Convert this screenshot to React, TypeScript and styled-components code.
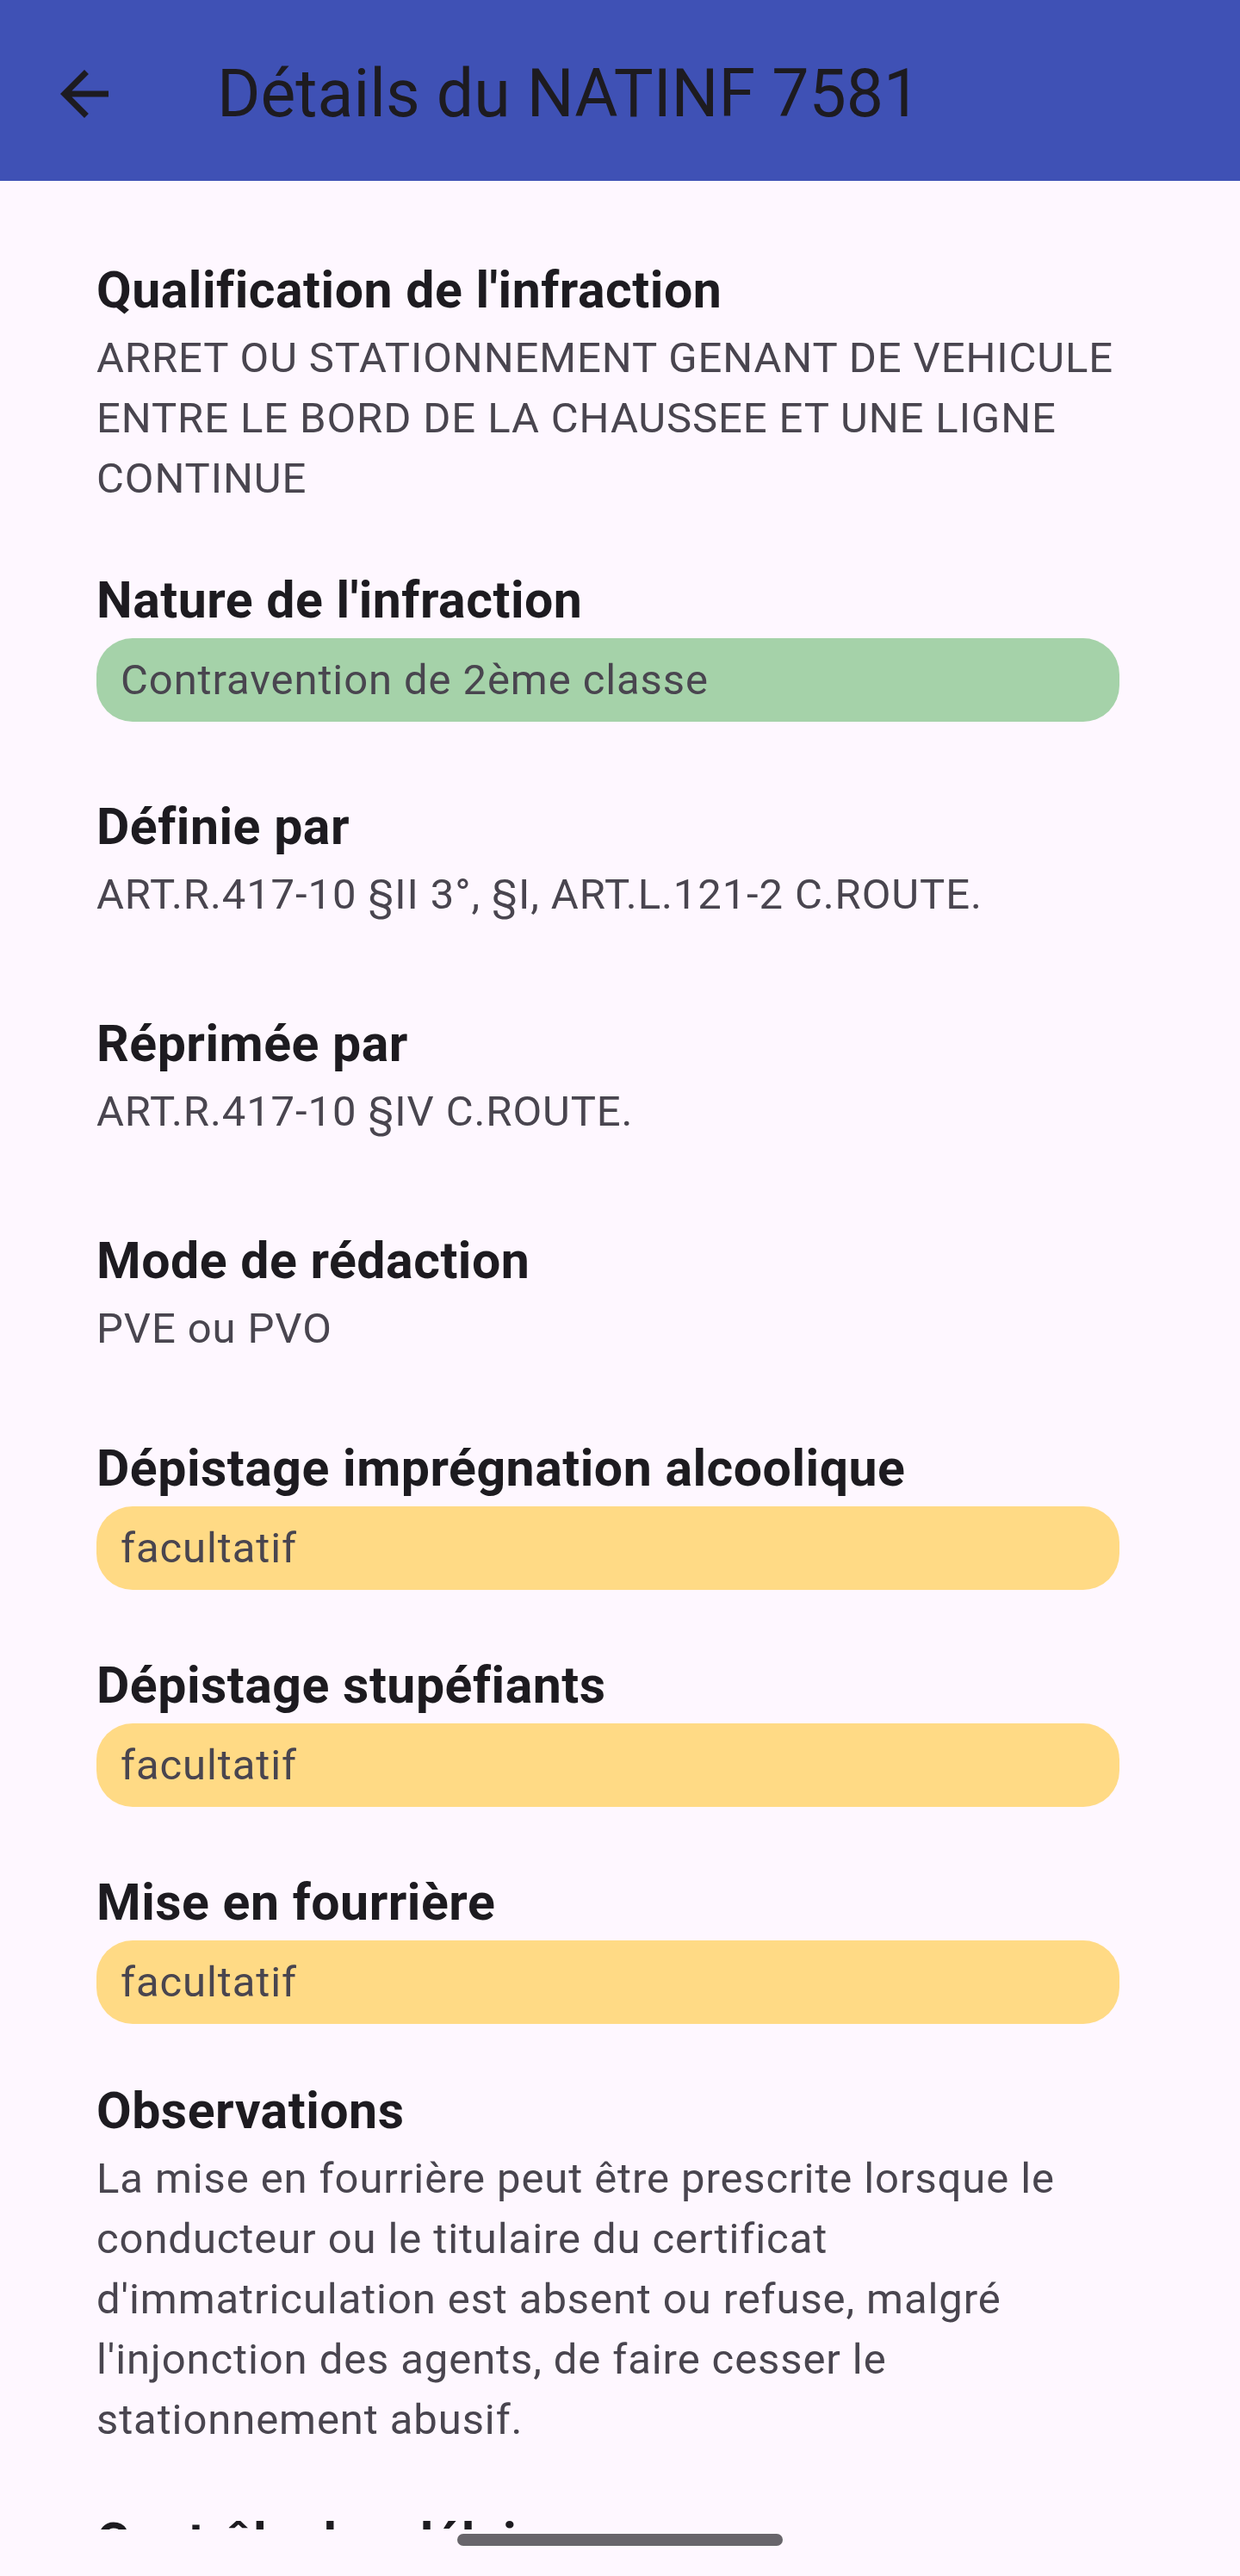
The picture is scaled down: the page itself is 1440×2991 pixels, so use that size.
import React from 'react';
import { createGlobalStyle, styled } from 'styled-components';

type TTone = 'green' | 'yellow';

type TDetail = {
  label: string;
  text: string;
  tone?: TTone;
};

const details: TDetail[] = [
  {
    label: "Qualification de l'infraction",
    text: 'ARRET OU STATIONNEMENT GENANT DE VEHICULE ENTRE LE BORD DE LA CHAUSSEE ET UNE LIGNE CONTINUE',
  },
  { label: "Nature de l'infraction", text: 'Contravention de 2ème classe', tone: 'green' },
  { label: 'Définie par', text: 'ART.R.417-10 §II 3°, §I, ART.L.121-2 C.ROUTE.' },
  { label: 'Réprimée par', text: 'ART.R.417-10 §IV C.ROUTE.' },
  { label: 'Mode de rédaction', text: 'PVE ou PVO' },
  { label: 'Dépistage imprégnation alcoolique', text: 'facultatif', tone: 'yellow' },
  { label: 'Dépistage stupéfiants', text: 'facultatif', tone: 'yellow' },
  { label: 'Mise en fourrière', text: 'facultatif', tone: 'yellow' },
  {
    label: 'Observations',
    text: "La mise en fourrière peut être prescrite lorsque le conducteur ou le titulaire du certificat d'immatriculation est absent ou refuse, malgré l'injonction des agents, de faire cesser le stationnement abusif.",
  },
  // partly hidden under the gesture bar, as in the scrolled screen
  { label: 'Contrôle des délais', text: '', tone: 'yellow' },
];

const GlobalStyle = createGlobalStyle`
  html, body {
    margin: 0;
    padding: 0;
    background: #fef7ff;
  }
  * {
    box-sizing: border-box;
  }
`;

const ScreenStyled = styled.div`
  width: 1440px;
  height: 2991px;
  display: flex;
  flex-direction: column;
  overflow: hidden;
  background: #fef7ff;
  font-family: Roboto, 'Noto Sans', sans-serif;
  color: #1d1b20;
`;

const AppBarStyled = styled.header`
  flex: 0 0 210px;
  display: flex;
  align-items: center;
  padding: 8px 0 0 56px;
  background: #3f51b5;
`;

const BackButton = styled.button`
  width: 84px;
  height: 84px;
  display: flex;
  align-items: center;
  justify-content: center;
  padding: 0;
  border: none;
  background: none;

  svg {
    width: 84px;
    height: 84px;
    fill: #1d1b20;
  }
`;

const AppBarTitle = styled.h1`
  margin: 0 0 0 112px;
  font-size: 77px;
  font-weight: 400;
  line-height: 100px;
  color: #1d1b20;
`;

const ContentStyled = styled.main`
  flex: 1;
  overflow: hidden;
  padding: 59px 140px 0 112px;
`;

const DetailTile = styled.section<{ $hasChip?: boolean }>`
  min-height: 252px;
  padding: ${({ $hasChip }) => ($hasChip ? '28px 0' : '24px 0 28px')};
  display: flex;
  flex-direction: column;
  justify-content: center;
`;

const DetailLabel = styled.h2`
  margin: 0;
  font-size: 59px;
  line-height: 88px;
  font-weight: 700;
  letter-spacing: 0.5px;
  color: #1d1b20;
`;

const DetailText = styled.p`
  margin: 0;
  font-size: 49px;
  line-height: 70px;
  letter-spacing: 0.9px;
  color: #49454f;
`;

const DetailChip = styled.div<{ $tone: TTone }>`
  height: 97px;
  display: flex;
  align-items: center;
  padding: 0 28px;
  border-radius: 42px;
  background: ${({ $tone }) => ($tone === 'green' ? '#a5d2a9' : '#ffda85')};
  font-size: 49px;
  letter-spacing: 0.9px;
  color: #49454f;
`;

const NavBarStyled = styled.div`
  flex: 0 0 54px;
  display: flex;
  justify-content: center;
  padding-top: 5px;
  background: #fef7ff;
`;

const NavHandle = styled.div`
  width: 378px;
  height: 14px;
  border-radius: 7px;
  background: #68656b;
`;

const ArrowBack = () => (
  <svg viewBox="0 0 24 24">
    <path d="M20 11H7.83l5.59-5.59L12 4l-8 8 8 8 1.41-1.41L7.83 13H20v-2z" />
  </svg>
);

const App = () => {
  return (
    <>
      <GlobalStyle />
      <ScreenStyled>
        <AppBarStyled>
          <BackButton type="button" aria-label="Retour">
            <ArrowBack />
          </BackButton>
          <AppBarTitle>Détails du NATINF 7581</AppBarTitle>
        </AppBarStyled>
        <ContentStyled>
          {details.map((detail) => (
            <DetailTile key={detail.label} $hasChip={!!detail.tone}>
              <DetailLabel>{detail.label}</DetailLabel>
              {detail.tone ? (
                <DetailChip $tone={detail.tone}>{detail.text}</DetailChip>
              ) : (
                <DetailText>{detail.text}</DetailText>
              )}
            </DetailTile>
          ))}
        </ContentStyled>
        <NavBarStyled>
          <NavHandle />
        </NavBarStyled>
      </ScreenStyled>
    </>
  );
};

export default App;
